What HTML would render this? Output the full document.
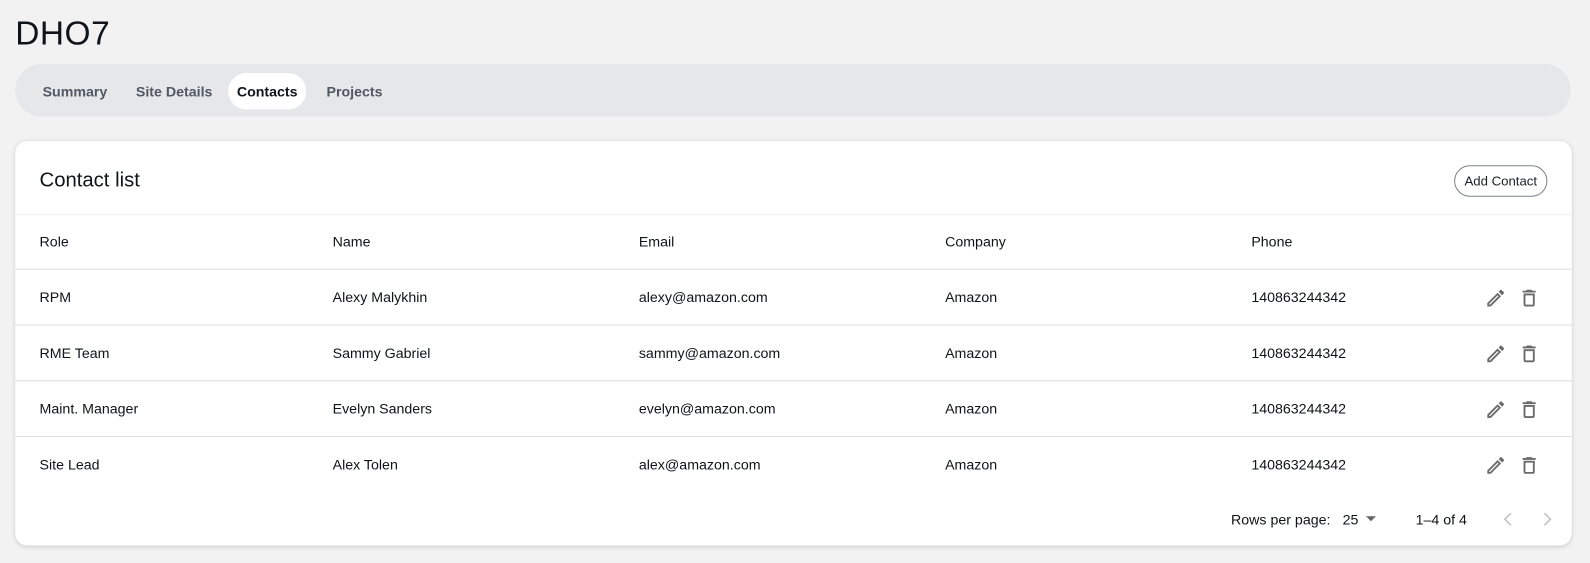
<!DOCTYPE html>
<html><head><meta charset="utf-8"><style>
*{box-sizing:border-box;margin:0;padding:0}
body{width:1590px;height:563px;background:#f2f2f2;font-family:"Liberation Sans",Arial,sans-serif;color:#0f141a;overflow:hidden}
#w{position:absolute;left:0;top:0;width:1568px;height:555px;transform:scale(1.01403);transform-origin:0 0}
h1{position:absolute;left:15px;top:14px;font-size:33px;font-weight:400;letter-spacing:0.5px}
.tabs{position:absolute;left:15px;top:63px;width:1534px;height:52px;background:#e6e7e9;border-radius:26px}
.tab{position:absolute;top:9px;height:36px;line-height:36px;font-size:14px;font-weight:bold;color:#505864;padding:0 12px}
.tab.a{background:#fff;color:#0f141a;border-radius:18px}
.card{position:absolute;left:15px;top:139px;width:1535px;height:399px;background:#fff;border-radius:12px;box-shadow:0 1px 4px rgba(0,0,0,.15)}
.ct{position:absolute;left:24px;top:28px;font-size:20px}
.btn{position:absolute;left:1419px;top:24px;width:92px;height:31px;border:1px solid #7d8288;border-radius:16px;font-size:13px;line-height:29px;text-align:center;color:#1a1f26}
.line{position:absolute;left:0;width:1535px;height:1px;background:#dcdcdc}
.c{position:absolute;font-size:14px;transform:translateY(-50%)}
.ic{position:absolute}
.foot{position:absolute;font-size:14px;top:373px;transform:translateY(-50%)}
</style></head><body><div id="w">
<h1>DHO7</h1>
<div class="tabs">
<div class="tab" style="left:15px">Summary</div>
<div class="tab" style="left:107px">Site Details</div>
<div class="tab a" style="left:210px;width:77px;text-align:center;padding:0">Contacts</div>
<div class="tab" style="left:295px">Projects</div>
</div>
<div class="card">
<div class="ct">Contact list</div>
<div class="btn">Add Contact</div>
<div class="line" style="top:72px;background:#f3f3f3"></div>
<div class="c" style="left:24px;top:99px">Role</div>
<div class="c" style="left:313px;top:99px">Name</div>
<div class="c" style="left:615px;top:99px">Email</div>
<div class="c" style="left:917px;top:99px">Company</div>
<div class="c" style="left:1219px;top:99px">Phone</div>
<div class="line" style="top:126px"></div>
<div class="line" style="top:181px"></div>
<div class="line" style="top:236px"></div>
<div class="line" style="top:291px"></div>

<div class="c" style="left:24px;top:154px">RPM</div>
<div class="c" style="left:313px;top:154px">Alexy Malykhin</div>
<div class="c" style="left:615px;top:154px">alexy@amazon.com</div>
<div class="c" style="left:917px;top:154px">Amazon</div>
<div class="c" style="left:1219px;top:154px">140863244342</div>

<div class="c" style="left:24px;top:209px">RME Team</div>
<div class="c" style="left:313px;top:209px">Sammy Gabriel</div>
<div class="c" style="left:615px;top:209px">sammy@amazon.com</div>
<div class="c" style="left:917px;top:209px">Amazon</div>
<div class="c" style="left:1219px;top:209px">140863244342</div>

<div class="c" style="left:24px;top:264px">Maint. Manager</div>
<div class="c" style="left:313px;top:264px">Evelyn Sanders</div>
<div class="c" style="left:615px;top:264px">evelyn@amazon.com</div>
<div class="c" style="left:917px;top:264px">Amazon</div>
<div class="c" style="left:1219px;top:264px">140863244342</div>

<div class="c" style="left:24px;top:319px">Site Lead</div>
<div class="c" style="left:313px;top:319px">Alex Tolen</div>
<div class="c" style="left:615px;top:319px">alex@amazon.com</div>
<div class="c" style="left:917px;top:319px">Amazon</div>
<div class="c" style="left:1219px;top:319px">140863244342</div>

<svg class="ic" style="left:1449px;top:144px" width="22" height="22" viewBox="0 0 24 24"><path fill="#6b6b6b" d="M3 17.25V21h3.75L17.81 9.94l-3.75-3.75L3 17.25zM5.92 19H5v-.92l9.06-9.06.92.92L5.92 19zM20.71 5.63l-2.34-2.34a1 1 0 0 0-1.41 0l-1.830 1.83 3.75 3.75 1.83-1.83a1 1 0 0 0 0-1.41z"/></svg>
<svg class="ic" style="left:1482px;top:144px" width="22" height="22" viewBox="0 0 24 24"><path fill="#6b6b6b" d="M16 9v10H8V9h8m-1.5-6h-5l-1 1H5v2h14V4h-3.5l-1-1zM18 7H6v12c0 1.1.9 2 2 2h8c1.1 0 2-.9 2-2V7z"/></svg>
<svg class="ic" style="left:1449px;top:199px" width="22" height="22" viewBox="0 0 24 24"><path fill="#6b6b6b" d="M3 17.25V21h3.75L17.81 9.94l-3.75-3.75L3 17.25zM5.92 19H5v-.92l9.06-9.06.92.92L5.92 19zM20.71 5.63l-2.34-2.34a1 1 0 0 0-1.41 0l-1.83 1.83 3.75 3.75 1.83-1.83a1 1 0 0 0 0-1.41z"/></svg>
<svg class="ic" style="left:1482px;top:199px" width="22" height="22" viewBox="0 0 24 24"><path fill="#6b6b6b" d="M16 9v10H8V9h8m-1.5-6h-5l-1 1H5v2h14V4h-3.5l-1-1zM18 7H6v12c0 1.1.9 2 2 2h8c1.1 0 2-.9 2-2V7z"/></svg>
<svg class="ic" style="left:1449px;top:254px" width="22" height="22" viewBox="0 0 24 24"><path fill="#6b6b6b" d="M3 17.25V21h3.75L17.81 9.94l-3.75-3.75L3 17.25zM5.92 19H5v-.92l9.06-9.06.92.92L5.92 19zM20.71 5.63l-2.34-2.34a1 1 0 0 0-1.41 0l-1.83 1.83 3.75 3.75 1.83-1.83a1 1 0 0 0 0-1.41z"/></svg>
<svg class="ic" style="left:1482px;top:254px" width="22" height="22" viewBox="0 0 24 24"><path fill="#6b6b6b" d="M16 9v10H8V9h8m-1.5-6h-5l-1 1H5v2h14V4h-3.5l-1-1zM18 7H6v12c0 1.1.9 2 2 2h8c1.1 0 2-.9 2-2V7z"/></svg>
<svg class="ic" style="left:1449px;top:309px" width="22" height="22" viewBox="0 0 24 24"><path fill="#6b6b6b" d="M3 17.25V21h3.75L17.81 9.94l-3.75-3.75L3 17.25zM5.92 19H5v-.92l9.06-9.06.92.92L5.92 19zM20.71 5.63l-2.34-2.34a1 1 0 0 0-1.41 0l-1.83 1.83 3.75 3.75 1.83-1.83a1 1 0 0 0 0-1.41z"/></svg>
<svg class="ic" style="left:1482px;top:309px" width="22" height="22" viewBox="0 0 24 24"><path fill="#6b6b6b" d="M16 9v10H8V9h8m-1.5-6h-5l-1 1H5v2h14V4h-3.5l-1-1zM18 7H6v12c0 1.1.9 2 2 2h8c1.1 0 2-.9 2-2V7z"/></svg>

<div class="foot" style="left:1199px">Rows per page:</div>
<div class="foot" style="left:1309px">25</div>
<svg class="ic" style="left:1332px;top:370px" width="10" height="6"><path d="M0 0h10L5 5z" fill="#666"/></svg>
<div class="foot" style="left:1381px">1–4 of 4</div>
<svg class="ic" style="left:1467px;top:366px" width="10" height="14"><path d="M8 1L2 7l6 6" stroke="#c4c4c4" stroke-width="1.6" fill="none"/></svg>
<svg class="ic" style="left:1506px;top:366px" width="10" height="14"><path d="M2 1l6 6-6 6" stroke="#c4c4c4" stroke-width="1.6" fill="none"/></svg>
</div>
</div></body></html>
